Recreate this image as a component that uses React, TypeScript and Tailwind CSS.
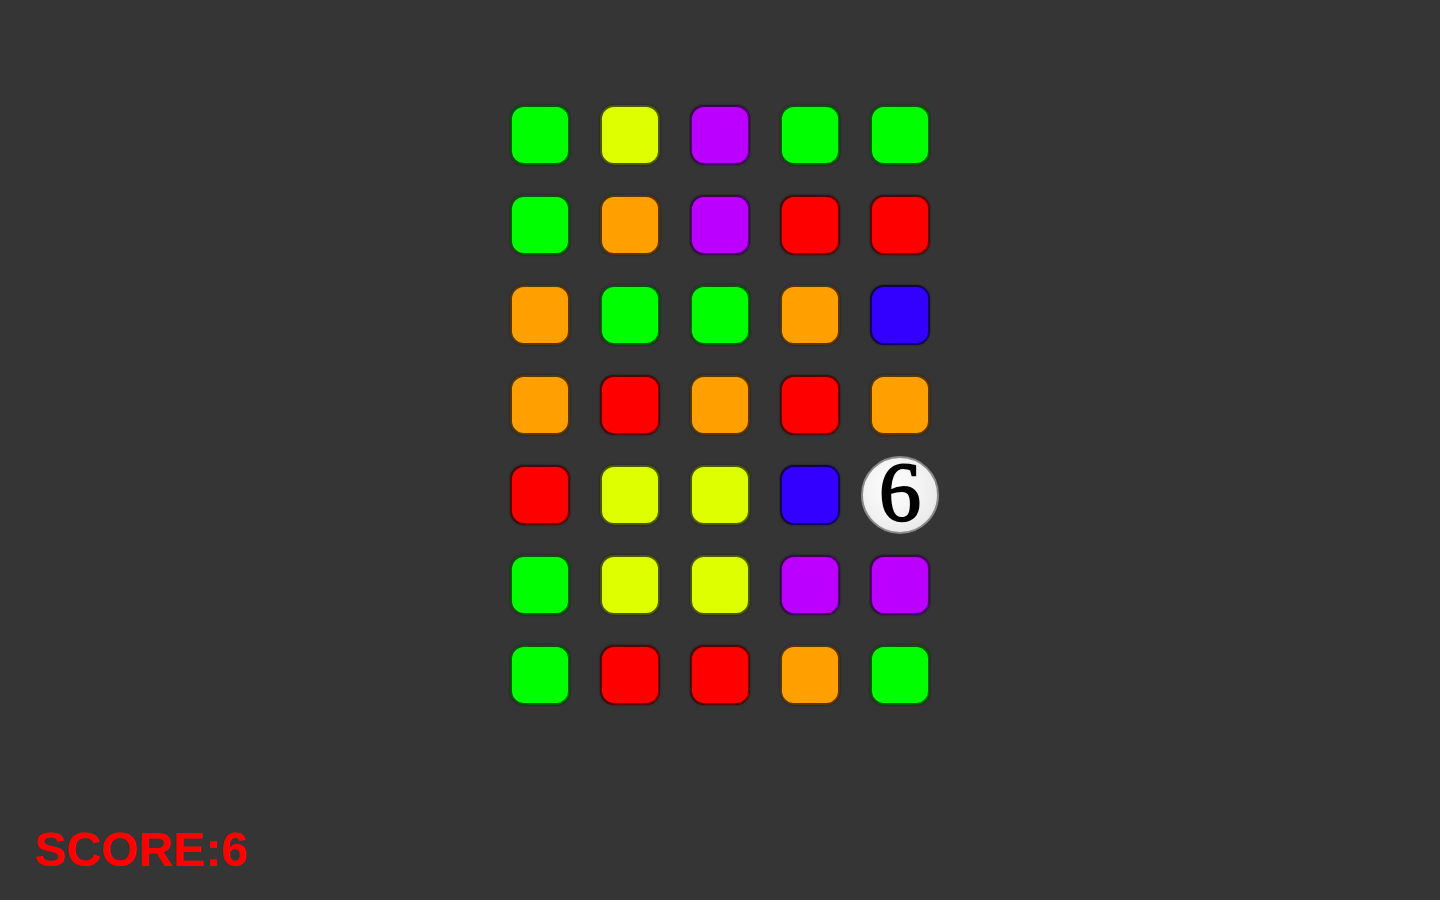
const colors: Record<string, string> = {
  G: 'bg-[#00ff00]',
  Y: 'bg-[#ddff00]',
  P: 'bg-[#bb00ff]',
  R: 'bg-[#ff0000]',
  O: 'bg-[#ffa000]',
  B: 'bg-[#3300ff]',
};

const board = [
  ['G', 'Y', 'P', 'G', 'G'],
  ['G', 'O', 'P', 'R', 'R'],
  ['O', 'G', 'G', 'O', 'B'],
  ['O', 'R', 'O', 'R', 'O'],
  ['R', 'Y', 'Y', 'B', '6'],
  ['G', 'Y', 'Y', 'P', 'P'],
  ['G', 'R', 'R', 'O', 'G'],
];

const Tile = ({ c }: { c: string }) => {
  if (c === '6') {
    return (
      <div className="w-[60px] h-[60px] flex items-center justify-center">
        <div className="w-[78px] h-[78px] shrink-0 rounded-full border-2 border-[#8a8a8a] bg-[radial-gradient(circle_at_40%_40%,#ffffff,#ececec_70%,#cfcfcf)] flex items-center justify-center blur-[0.5px]">
          <span className="text-[84px] leading-none text-black font-['Liberation_Serif',serif] -mt-[4px] [-webkit-text-stroke:2px_black]">
            6
          </span>
        </div>
      </div>
    );
  }
  return (
    <div
      className={`w-[60px] h-[60px] rounded-[14px] border-2 border-black/65 shadow-[0_0_2px_rgba(0,0,0,0.5)] ${colors[c]}`}
    />
  );
};

export default function App() {
  return (
    <div className="w-full h-screen bg-[#353535] flex flex-col overflow-hidden">
      <div className="pt-[105px] flex justify-center">
        <div className="grid grid-cols-5 gap-[30px]">
          {board.flat().map((c, i) => (
            <Tile key={i} c={c} />
          ))}
        </div>
      </div>
      <div className="mt-[121px] pl-[34px] text-[48px] leading-none font-bold text-[#ff0000] font-['Liberation_Sans',Arial,sans-serif]">
        SCORE:6
      </div>
    </div>
  );
}
